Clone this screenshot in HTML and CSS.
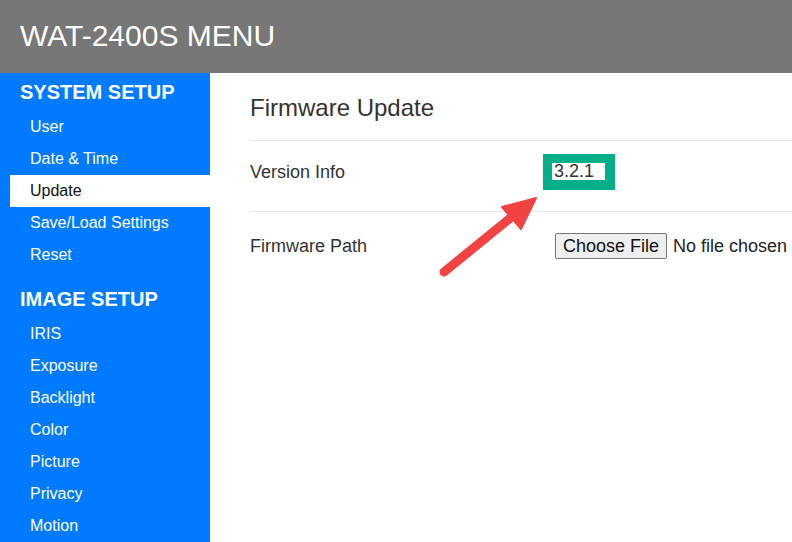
FILE: index.html
```html
<!DOCTYPE html>
<html>
<head>
<meta charset="utf-8">
<link rel="stylesheet" href="styles.css">
</head>
<body>
<header class="topbar">
  <h1 class="brand">WAT-2400S MENU</h1>
</header>
<div class="layout">
  <nav class="sidebar">
    <div class="section">SYSTEM SETUP</div>
    <a class="item">User</a>
    <a class="item">Date &amp; Time</a>
    <a class="item active">Update</a>
    <a class="item">Save/Load Settings</a>
    <a class="item">Reset</a>
    <div class="section second">IMAGE SETUP</div>
    <a class="item">IRIS</a>
    <a class="item">Exposure</a>
    <a class="item">Backlight</a>
    <a class="item">Color</a>
    <a class="item">Picture</a>
    <a class="item">Privacy</a>
    <a class="item">Motion</a>
  </nav>
  <main class="content">
    <h2 class="page-title">Firmware Update</h2>
    <div class="row row-version">
      <div class="label">Version Info</div>
      <div class="value"><span class="highlight"><input class="version" type="text" value="3.2.1" readonly></span></div>
    </div>
    <div class="row row-path">
      <div class="label">Firmware Path</div>
      <div class="value"><input class="file" type="file"></div>
    </div>
  </main>
</div>
<svg class="annotation" width="792" height="542" viewBox="0 0 792 542">
  <line x1="444" y1="272" x2="514" y2="215" stroke="#f24343" stroke-width="9" stroke-linecap="round"/>
  <polygon points="502,207 536,198 521,229" fill="#f24343" stroke="#f24343" stroke-width="2" stroke-linejoin="round"/>
</svg>
</body>
</html>
```

FILE: styles.css
```css
html, body {
  margin: 0;
  padding: 0;
}
body {
  font-family: "Liberation Sans", Arial, sans-serif;
  color: #333;
  width: 792px;
  height: 542px;
  overflow: hidden;
  position: relative;
  background: #fff;
}
.topbar {
  height: 73px;
  background: #777777;
  display: flex;
  align-items: center;
  padding-left: 20px;
}
.brand {
  margin: 0;
  font-weight: normal;
  font-size: 30px;
  color: #fff;
  line-height: 36px;
  padding-bottom: 2px;
}
.layout {
  display: flex;
  height: 469px;
}
.sidebar {
  width: 210px;
  flex: none;
  background: #007bff;
  padding-top: 7px;
  box-sizing: border-box;
  display: flex;
  flex-direction: column;
}
.section {
  color: #fff;
  font-weight: bold;
  font-size: 20px;
  line-height: 24px;
  padding-left: 20px;
  margin-bottom: 7px;
}
.section.second {
  margin-top: 16px;
}
.item {
  display: block;
  color: #fff;
  font-size: 16px;
  line-height: 32px;
  height: 32px;
  margin-left: 10px;
  padding-left: 20px;
}
.item.active {
  background: #fff;
  color: #111;
}
.content {
  flex: 1;
  min-width: 0;
  overflow: hidden;
  padding: 20px 0 0 40px;
}
.page-title {
  margin: 0;
  font-weight: normal;
  font-size: 24px;
  line-height: 30px;
  color: #333;
  padding-bottom: 17px;
  border-bottom: 1px solid #e6e6e6;
}
.row {
  display: grid;
  grid-template-columns: 302px 1fr;
  align-items: center;
  font-size: 18px;
}
.row-version {
  padding: 13px 0 21px;
  border-bottom: 1px solid #e6e6e6;
}
.row-path {
  padding-top: 21px;
}
.label {
  color: #333;
}
.value {
  white-space: nowrap;
}
.highlight {
  display: inline-block;
  margin-left: -9px;
  padding: 9px 10px 10px 9px;
  background: #03ae8a;
  line-height: 0;
}
.version {
  width: 53px;
  height: 17px;
  box-sizing: border-box;
  border: none;
  outline: none;
  padding: 0 0 0 2px;
  margin: 0;
  font-family: "Liberation Sans", Arial, sans-serif;
  font-size: 18px;
  color: #333;
  background: #fff;
  line-height: 17px;
}
.file {
  margin-left: 3px;
  font-family: "Liberation Sans", Arial, sans-serif;
  font-size: 18px;
  color: #222;
}
.file::file-selector-button {
  font-family: "Liberation Sans", Arial, sans-serif;
  font-size: 18px;
  height: 26px;
  padding: 0 7px;
  margin-right: 6px;
  background: #efefef;
  border: 1px solid #767676;
  border-radius: 2px;
  color: #111;
}
.annotation {
  position: absolute;
  left: 0;
  top: 0;
  pointer-events: none;
}
```
